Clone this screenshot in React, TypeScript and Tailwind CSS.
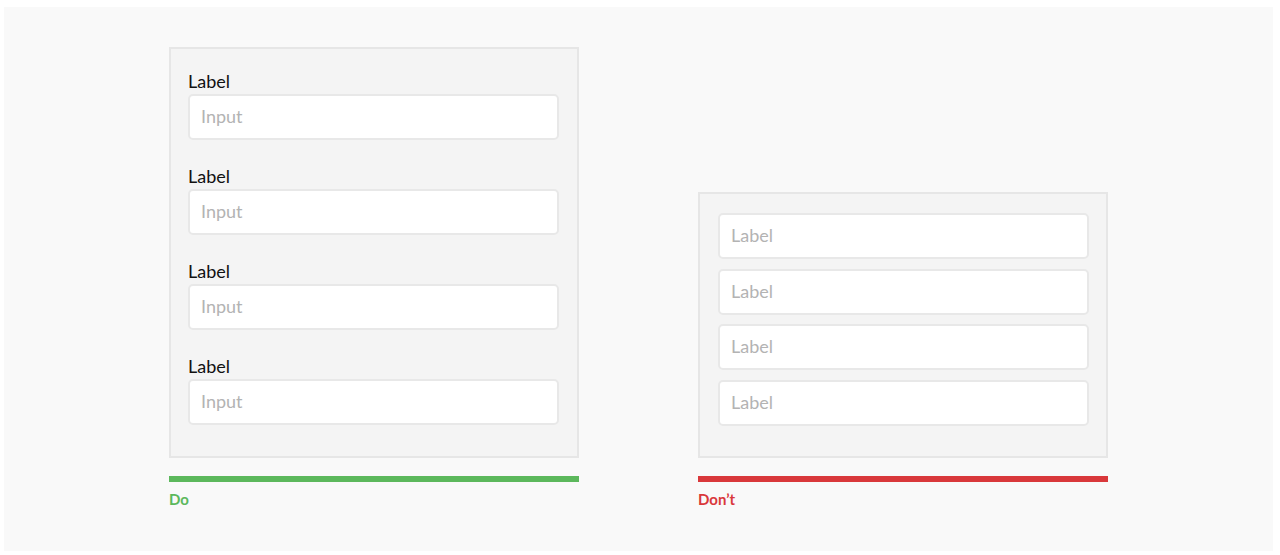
import React from 'react'

const Field = ({ placeholder }: { placeholder: string }) => (
  <div className="h-[46px] w-[371px] rounded-[5px] border-2 border-[#e8e8e8] bg-white pl-[11px] pb-[2px] flex items-center text-[18px] leading-[22px] text-[#b3b3b3]">
    {placeholder}
  </div>
)

export default function App() {
  const rows = [0, 1, 2, 3]

  return (
    <div className="min-h-screen bg-white font-['Lato','Liberation_Sans',sans-serif] antialiased">
      <div className="ml-[4px] pt-[7px] w-[1269px]">
        <div className="h-[544px] bg-[#f9f9f9] flex items-start pl-[165px] pt-[40px]">
          {/* Do */}
          <div className="w-[410px]">
            <div className="h-[411px] border-2 border-[#e6e6e6] bg-[#f4f4f4] pl-[17px] pt-[21px] flex flex-col gap-[25px]">
              {rows.map(i => (
                <div key={i} className="flex flex-col gap-[2px]">
                  <div className="text-[18px] leading-[22px] text-[#111]">Label</div>
                  <Field placeholder="Input" />
                </div>
              ))}
            </div>
            <div className="mt-[18px] h-[6px] bg-[#5cb85c]" />
            <div className="mt-[8px] text-[15px] leading-[18px] font-bold text-[#5cb85c]">Do</div>
          </div>

          {/* Don't */}
          <div className="w-[410px] ml-[119px] mt-[145px]">
            <div className="h-[266px] border-2 border-[#e6e6e6] bg-[#f4f4f4] pl-[18px] pt-[19px] flex flex-col gap-[9.5px]">
              {rows.map(i => (
                <Field key={i} placeholder="Label" />
              ))}
            </div>
            <div className="mt-[18px] h-[6px] bg-[#d9383b]" />
            <div className="mt-[8px] text-[15px] leading-[18px] font-bold text-[#d9383b]">Don’t</div>
          </div>
        </div>
      </div>
    </div>
  )
}
